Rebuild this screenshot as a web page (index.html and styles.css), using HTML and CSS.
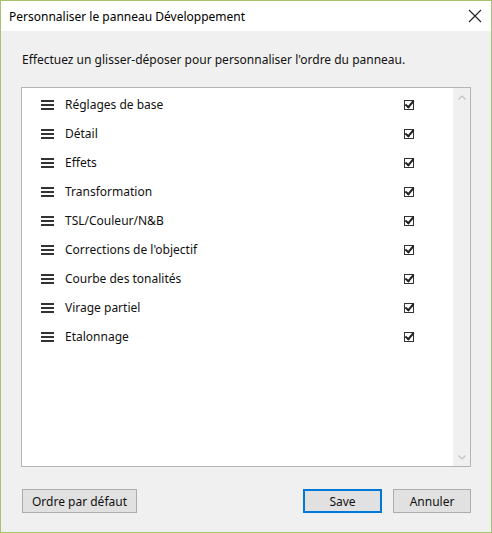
FILE: index.html
```html
<!DOCTYPE html>
<html lang="fr">
<head>
<meta charset="UTF-8" />
<title>Personnaliser le panneau Développement</title>
<link rel="stylesheet" href="styles.css">
</head>
<body>
<div class="window">
  <div class="titlebar">
    <span class="title">Personnaliser le panneau Développement</span>
    <svg class="close" width="14" height="14" viewBox="0 0 14 14">
      <path d="M1 1 L13 13 M13 1 L1 13" stroke="#222" stroke-width="1.1" fill="none"/>
    </svg>
  </div>

  <p class="intro">Effectuez un glisser-déposer pour personnaliser l'ordre du panneau.</p>

  <div class="listbox">
    <ul class="items">
      <li class="item"><span class="grip"></span><span class="label">Réglages de base</span><span class="check"></span></li>
      <li class="item"><span class="grip"></span><span class="label">Détail</span><span class="check"></span></li>
      <li class="item"><span class="grip"></span><span class="label">Effets</span><span class="check"></span></li>
      <li class="item"><span class="grip"></span><span class="label">Transformation</span><span class="check"></span></li>
      <li class="item"><span class="grip"></span><span class="label">TSL/Couleur/N&amp;B</span><span class="check"></span></li>
      <li class="item"><span class="grip"></span><span class="label">Corrections de l'objectif</span><span class="check"></span></li>
      <li class="item"><span class="grip"></span><span class="label">Courbe des tonalités</span><span class="check"></span></li>
      <li class="item"><span class="grip"></span><span class="label">Virage partiel</span><span class="check"></span></li>
      <li class="item"><span class="grip"></span><span class="label">Etalonnage</span><span class="check"></span></li>
    </ul>
    <div class="scrollbar">
      <svg width="8" height="5" viewBox="0 0 8 5"><path d="M0.5 4.5 L4 1 L7.5 4.5" stroke="#c2c2c2" stroke-width="1.2" fill="none"/></svg>
      <svg width="8" height="5" viewBox="0 0 8 5"><path d="M0.5 0.5 L4 4 L7.5 0.5" stroke="#c2c2c2" stroke-width="1.2" fill="none"/></svg>
    </div>
  </div>

  <div class="footer">
    <button class="btn btn-reset">Ordre par défaut</button>
    <div class="actions">
      <button class="btn btn-save">Save</button>
      <button class="btn btn-cancel">Annuler</button>
    </div>
  </div>
</div>
</body>
</html>
```

FILE: styles.css
```css
body {
  margin: 0;
  font-family: "Noto Sans", "Open Sans", sans-serif;
  font-size: 12px;
  color: #111;
}
.window {
  box-sizing: border-box;
  width: 492px;
  height: 533px;
  border: 1px solid #a6c46e;
  background: #f0f0f0;
  display: flex;
  flex-direction: column;
}
.titlebar {
  height: 30px;
  background: white;
  display: flex;
  align-items: center;
  justify-content: space-between;
  padding: 0 9px 0 8px;
}
.title {
  color: #000;
}
.intro {
  margin: 20px 0 0 21px;
  line-height: 18px;
}
.listbox {
  margin: 18px 20px 0 20px;
  height: 378px;
  border: 1px solid #b4b4b4;
  background: white;
  display: flex;
}
.items {
  flex: 1;
  list-style: none;
  margin: 0;
  padding: 2px 0 0 0;
}
.item {
  height: 29px;
  display: flex;
  align-items: center;
  padding-left: 19px;
}
.grip {
  width: 13px;
  height: 10px;
  border-top: 2px solid #333;
  border-bottom: 2px solid #333;
  box-sizing: border-box;
  position: relative;
  margin-right: 11px;
}
.grip::after {
  content: "";
  position: absolute;
  left: 0;
  right: 0;
  top: 2px;
  height: 2px;
  background: #333;
}
.label {
  flex: 1;
}
.check {
  width: 8px;
  height: 8px;
  border: 1px solid #333;
  margin-right: 39px;
  position: relative;
  background: white;
}
.check::after {
  content: "";
  position: absolute;
  left: 2px;
  top: -2px;
  width: 3px;
  height: 7px;
  border-right: 2px solid #222;
  border-bottom: 2px solid #222;
  transform: rotate(40deg);
}
.scrollbar {
  width: 17px;
  background: #f0f0f0;
  display: flex;
  flex-direction: column;
  justify-content: space-between;
  align-items: center;
  padding: 7px 0 6px;
}
.footer {
  display: flex;
  justify-content: space-between;
  margin: 22px 20px 0 21px;
}
.actions {
  display: flex;
  gap: 11px;
}
.btn {
  font-family: inherit;
  font-size: 12px;
  height: 24px;
  background: #e1e1e1;
  border: 1px solid #adadad;
  color: #111;
  padding: 0;
}
.btn-reset {
  width: 115px;
}
.btn-save {
  width: 79px;
  border: 2px solid #0078d7;
}
.btn-cancel {
  width: 78px;
}
```
